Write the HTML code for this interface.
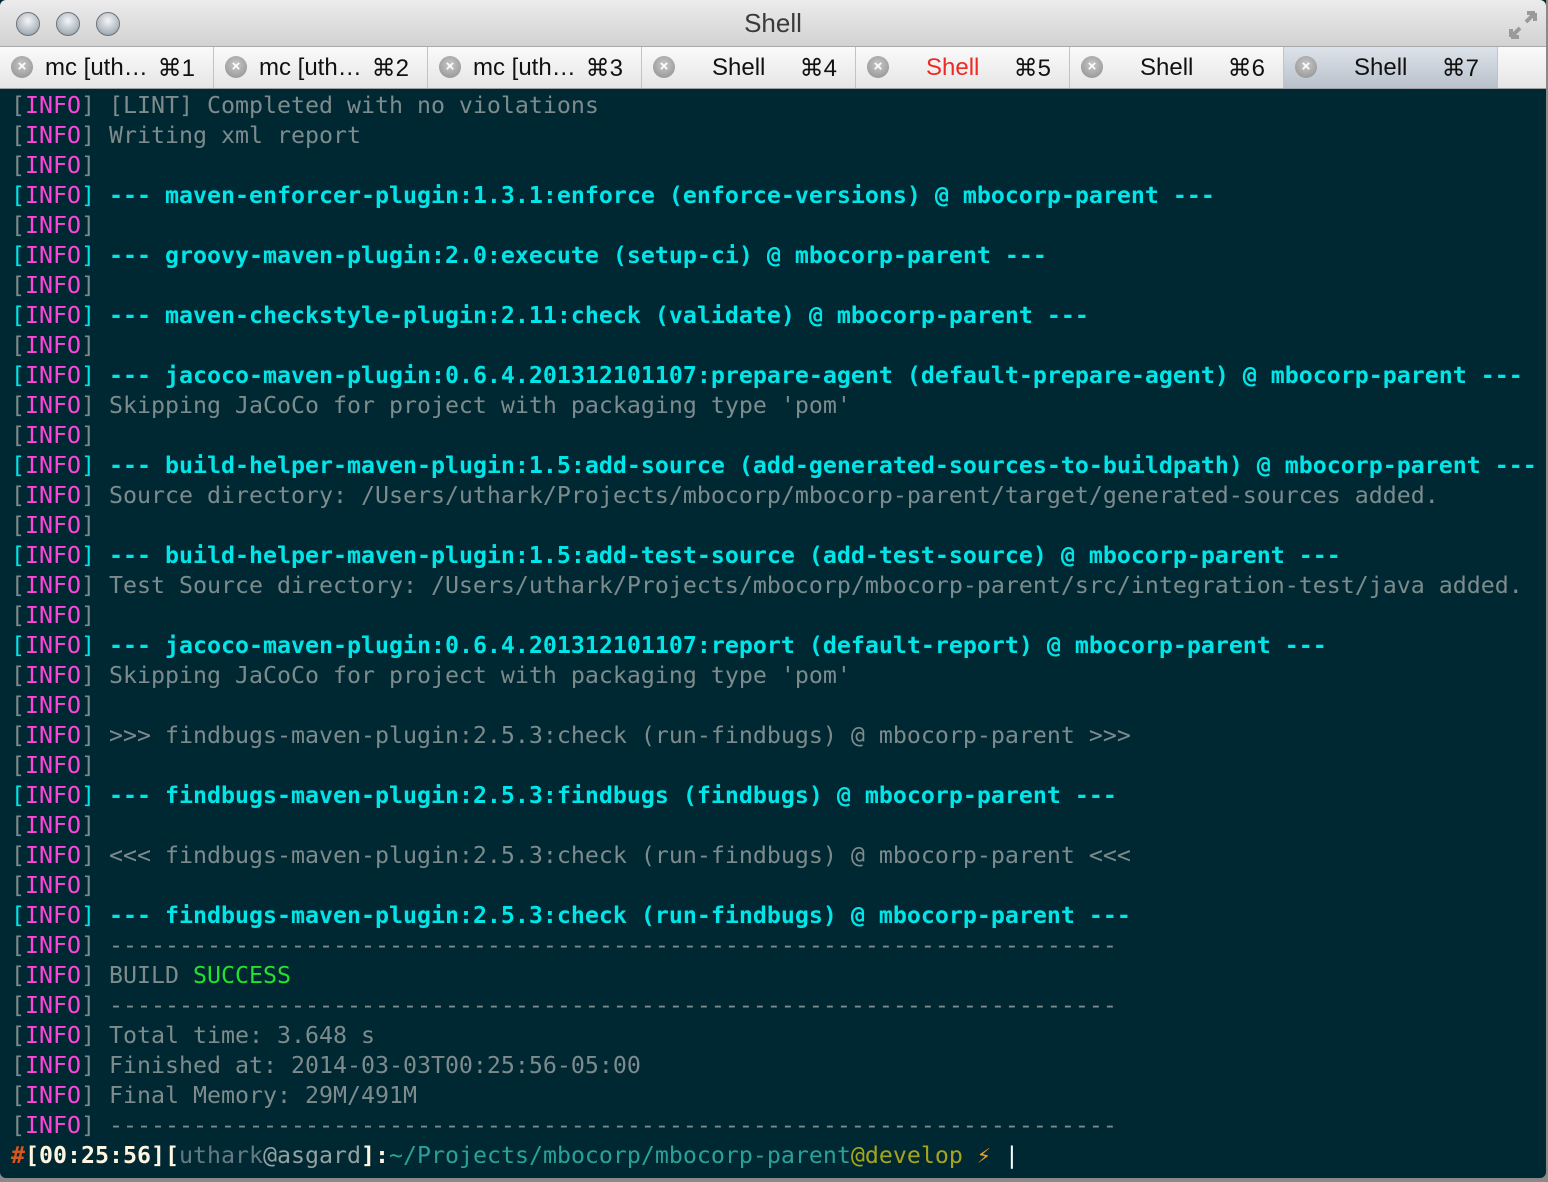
<!DOCTYPE html>
<html><head><meta charset="utf-8"><style>
html,body{margin:0;padding:0;width:1548px;height:1182px;overflow:hidden;background:#8a8a8a;}
#win{position:absolute;left:0;top:0;width:1546px;height:1178px;background:#002833;border-radius:0 0 6px 6px;overflow:hidden;}
#title{position:absolute;left:0;top:0;width:1546px;height:46px;background:linear-gradient(#ececec,#d2d2d2);border-bottom:1px solid #a9a9a9;border-radius:6px 6px 0 0;}
#title .t{position:absolute;left:0;right:0;top:8px;text-align:center;font:26px "Liberation Sans",sans-serif;color:#3a3a3a;}
.btn{position:absolute;top:12px;width:22px;height:22px;border-radius:50%;background:radial-gradient(circle at 50% 35%,#f4f6f8,#a9b2ba 70%,#7f8890);border:1px solid #6d7379;}
#tabs{position:absolute;left:0;top:47px;width:1546px;height:41px;background:linear-gradient(#fafafa,#e6e6e6);border-bottom:1px solid #a0a0a0;}
.tab{position:absolute;top:0;height:41px;width:213px;border-right:1px solid #c3c3c3;font:24px "Liberation Sans",sans-serif;color:#111;}
.tab.sel{background:linear-gradient(#dde3ea,#b9c1cb);}
.tab .x{position:absolute;left:11px;top:9px;width:22px;height:22px;border-radius:50%;background:radial-gradient(circle at 50% 40%,#c9c9c9,#8c8c8c);color:#fff;font:bold 15px "Liberation Sans",sans-serif;text-align:center;line-height:22px;}
.tab .n{position:absolute;left:45px;top:7px;}
.tab .n.cn{left:70px;}
.tab .k{position:absolute;right:18px;top:7px;}
#term{position:absolute;left:11px;top:91px;font:23.25px/30px "DejaVu Sans Mono","Liberation Mono",monospace;color:#7d8b8c;white-space:pre;}
.m{color:#ff45d9;}
.c{color:#00e5e8;font-weight:bold;}
.cb{color:#00e5e8;}
.s{color:#22e22c;}
</style></head><body>
<div id="win">
<div id="title"><div class="btn" style="left:16px"></div><div class="btn" style="left:56px"></div><div class="btn" style="left:96px"></div><div class="t">Shell</div>
<svg style="position:absolute;left:1508px;top:10px" width="30" height="30"><path d="M3 27 L12 18 M3 27 V19 M3 27 H11 M27 3 L18 12 M27 3 V11 M27 3 H19" stroke="#9a9a9a" stroke-width="4" fill="none"/></svg></div>
<div id="tabs">
<div class="tab" style="left:0"><div class="x">×</div><span class="n">mc [uth…</span><span class="k">⌘1</span></div>
<div class="tab" style="left:214px"><div class="x">×</div><span class="n">mc [uth…</span><span class="k">⌘2</span></div>
<div class="tab" style="left:428px"><div class="x">×</div><span class="n">mc [uth…</span><span class="k">⌘3</span></div>
<div class="tab" style="left:642px"><div class="x">×</div><span class="n cn">Shell</span><span class="k">⌘4</span></div>
<div class="tab" style="left:856px"><div class="x">×</div><span class="n cn" style="color:#ee2a24">Shell</span><span class="k">⌘5</span></div>
<div class="tab" style="left:1070px"><div class="x">×</div><span class="n cn">Shell</span><span class="k">⌘6</span></div>
<div class="tab sel" style="left:1284px"><div class="x">×</div><span class="n cn">Shell</span><span class="k">⌘7</span></div>
</div>
<div id="term">[<span class="m">INFO</span>] [LINT] Completed with no violations
[<span class="m">INFO</span>] Writing xml report
[<span class="m">INFO</span>]
<span class="cb">[</span><span class="m">INFO</span><span class="cb">]</span> <span class="c">--- maven-enforcer-plugin:1.3.1:enforce (enforce-versions) @ mbocorp-parent ---</span>
[<span class="m">INFO</span>]
<span class="cb">[</span><span class="m">INFO</span><span class="cb">]</span> <span class="c">--- groovy-maven-plugin:2.0:execute (setup-ci) @ mbocorp-parent ---</span>
[<span class="m">INFO</span>]
<span class="cb">[</span><span class="m">INFO</span><span class="cb">]</span> <span class="c">--- maven-checkstyle-plugin:2.11:check (validate) @ mbocorp-parent ---</span>
[<span class="m">INFO</span>]
<span class="cb">[</span><span class="m">INFO</span><span class="cb">]</span> <span class="c">--- jacoco-maven-plugin:0.6.4.201312101107:prepare-agent (default-prepare-agent) @ mbocorp-parent ---</span>
[<span class="m">INFO</span>] Skipping JaCoCo for project with packaging type 'pom'
[<span class="m">INFO</span>]
<span class="cb">[</span><span class="m">INFO</span><span class="cb">]</span> <span class="c">--- build-helper-maven-plugin:1.5:add-source (add-generated-sources-to-buildpath) @ mbocorp-parent ---</span>
[<span class="m">INFO</span>] Source directory: /Users/uthark/Projects/mbocorp/mbocorp-parent/target/generated-sources added.
[<span class="m">INFO</span>]
<span class="cb">[</span><span class="m">INFO</span><span class="cb">]</span> <span class="c">--- build-helper-maven-plugin:1.5:add-test-source (add-test-source) @ mbocorp-parent ---</span>
[<span class="m">INFO</span>] Test Source directory: /Users/uthark/Projects/mbocorp/mbocorp-parent/src/integration-test/java added.
[<span class="m">INFO</span>]
<span class="cb">[</span><span class="m">INFO</span><span class="cb">]</span> <span class="c">--- jacoco-maven-plugin:0.6.4.201312101107:report (default-report) @ mbocorp-parent ---</span>
[<span class="m">INFO</span>] Skipping JaCoCo for project with packaging type 'pom'
[<span class="m">INFO</span>]
[<span class="m">INFO</span>] &gt;&gt;&gt; findbugs-maven-plugin:2.5.3:check (run-findbugs) @ mbocorp-parent &gt;&gt;&gt;
[<span class="m">INFO</span>]
<span class="cb">[</span><span class="m">INFO</span><span class="cb">]</span> <span class="c">--- findbugs-maven-plugin:2.5.3:findbugs (findbugs) @ mbocorp-parent ---</span>
[<span class="m">INFO</span>]
[<span class="m">INFO</span>] &lt;&lt;&lt; findbugs-maven-plugin:2.5.3:check (run-findbugs) @ mbocorp-parent &lt;&lt;&lt;
[<span class="m">INFO</span>]
<span class="cb">[</span><span class="m">INFO</span><span class="cb">]</span> <span class="c">--- findbugs-maven-plugin:2.5.3:check (run-findbugs) @ mbocorp-parent ---</span>
[<span class="m">INFO</span>] ------------------------------------------------------------------------
[<span class="m">INFO</span>] BUILD <span class="s">SUCCESS</span>
[<span class="m">INFO</span>] ------------------------------------------------------------------------
[<span class="m">INFO</span>] Total time: 3.648 s
[<span class="m">INFO</span>] Finished at: 2014-03-03T00:25:56-05:00
[<span class="m">INFO</span>] Final Memory: 29M/491M
[<span class="m">INFO</span>] ------------------------------------------------------------------------
<span style="color:#d5571d;font-weight:bold">#</span><span style="color:#fdf5e0;font-weight:bold">[00:25:56][</span><span style="color:#657b83">uthark</span><span style="color:#93a1a1">@asgard</span><span style="color:#fdf5e0;font-weight:bold">]:</span><span style="color:#2aa198">~/Projects/mbocorp/mbocorp-parent</span><span style="color:#a5a51b">@develop</span> <span style="color:#f0a020">⚡</span> <span style="color:#fff">|</span></div>
</div>
</body></html>
